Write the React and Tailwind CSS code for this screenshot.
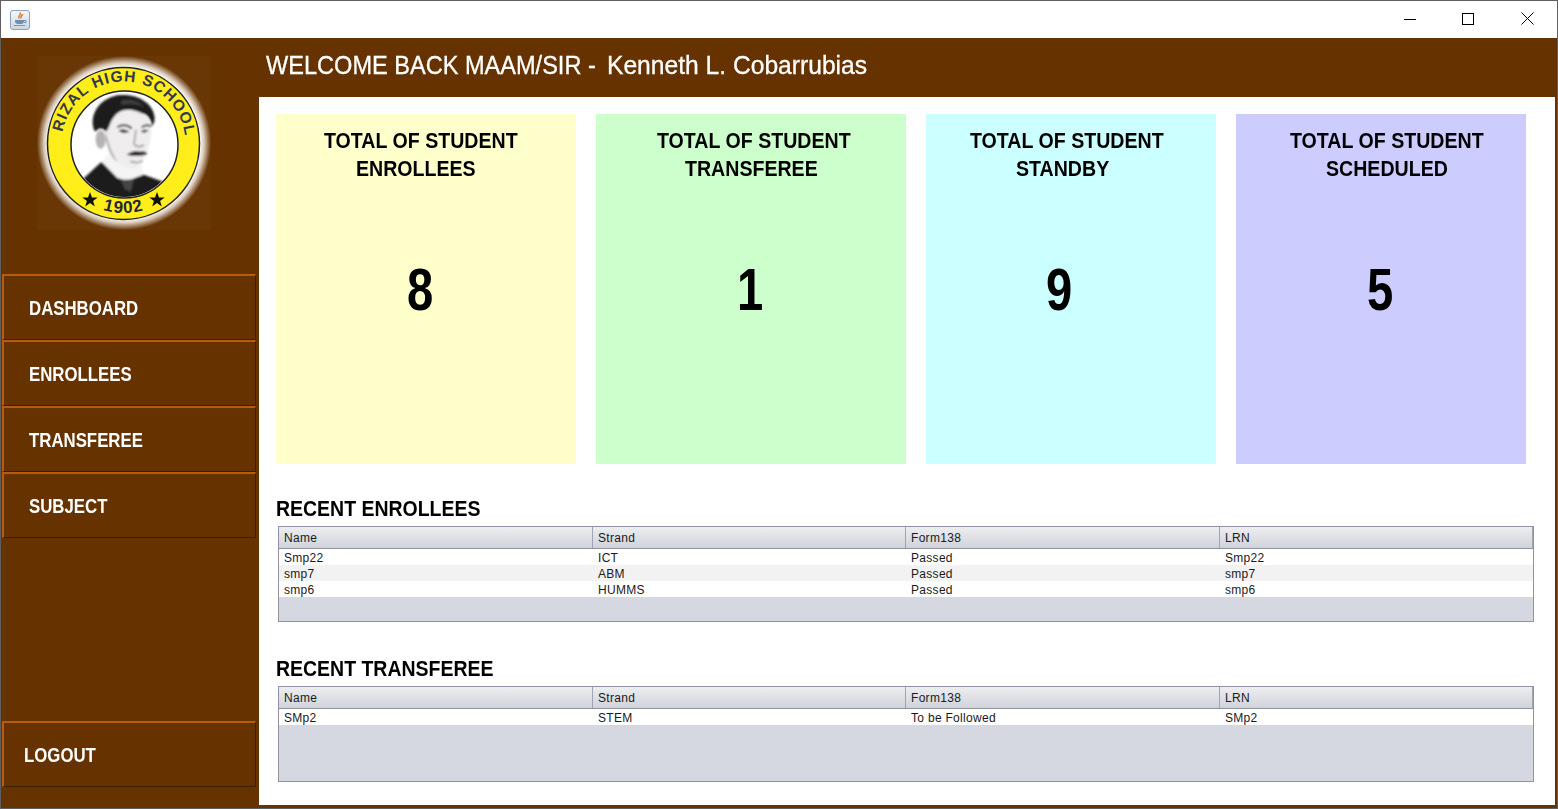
const sans = { fontFamily: '"Liberation Sans", Arial, sans-serif' };

const cards = [
  { bg: "bg-[#ffffcc]", w: "w-[300px]", line1: "ml-[48px]", line2: "ml-[80px]", num: "ml-[131px]", l2: "ENROLLEES", value: 8 },
  { bg: "bg-[#ccffcc]", w: "w-[310px]", line1: "ml-[61px]", line2: "ml-[89px]", num: "ml-[141px]", l2: "TRANSFEREE", value: 1 },
  { bg: "bg-[#ccffff]", w: "w-[290px]", line1: "ml-[44px]", line2: "ml-[90px]", num: "ml-[120px]", l2: "STANDBY", value: 9 },
  { bg: "bg-[#ccccff]", w: "w-[290px]", line1: "ml-[54px]", line2: "ml-[90px]", num: "ml-[131px]", l2: "SCHEDULED", value: 5 },
];

const enrollees = [
  ["Smp22", "ICT", "Passed", "Smp22"],
  ["smp7", "ABM", "Passed", "smp7"],
  ["smp6", "HUMMS", "Passed", "smp6"],
];
const transferees = [["SMp2", "STEM", "To be Followed", "SMp2"]];
const columns = ["Name", "Strand", "Form138", "LRN"];

function JavaIcon() {
  return (
    <div className="flex h-[20px] w-[20px] items-center justify-center rounded-[3px] border border-[#8aa4bd] bg-gradient-to-b from-[#f4f7fa] to-[#c9d6e2]">
      <svg width="14" height="15" viewBox="0 0 14 15">
        <path d="M7 0.500c1.500 2-2 3-1 6M9.500 2c0 2-2.500 2-1.500 4.500" stroke="#e8792b" strokeWidth="1.500" fill="none" />
        <path d="M2 8h9v1c0 2-1 3-3 3H5C3 12 2 11 2 9z" fill="#6f8fae" />
        <path d="M11 8.500h2v2h-2" stroke="#6f8fae" fill="none" />
        <path d="M1 13.500h11" stroke="#7d98b3" />
      </svg>
    </div>
  );
}

function TitleBar() {
  return (
    <div className="flex h-[37px] items-center bg-white pl-[9px]">
      <JavaIcon />
      <div className="ml-auto flex h-full">
        <button className="flex w-[59px] items-center justify-center pb-[2px]">
          <svg width="12" height="12" viewBox="0 0 12 12">
            <path d="M0 6.500h12" stroke="#000" />
          </svg>
        </button>
        <button className="mr-px flex w-[58px] items-center justify-center pb-[2px]">
          <svg width="12" height="12" viewBox="0 0 12 12">
            <rect x="0.500" y="0.500" width="11" height="11" fill="none" stroke="#000" />
          </svg>
        </button>
        <button className="flex w-[59px] items-center justify-center pb-[2px]">
          <svg width="13" height="13" viewBox="0 0 13 13">
            <path d="M0.500 0.500l12 12M12.500 0.500l-12 12" stroke="#000" />
          </svg>
        </button>
      </div>
    </div>
  );
}

function Logo() {
  return (
    <svg width="174" height="174" viewBox="0 0 174 174">
      <defs>
        <radialGradient id="glow" cx="0.500" cy="0.500" r="0.500">
          <stop offset="0.870" stopColor="#ffffff" />
          <stop offset="0.920" stopColor="#d9c9b8" />
          <stop offset="1" stopColor="#693706" />
        </radialGradient>
        <path id="topArc" d="M 24.500 87.500 A 62 62 0 0 1 148.500 87.500" />
        <path id="bottomArc" d="M 17 87.500 A 69.500 69.500 0 0 0 156 87.500" />
        <clipPath id="inner">
          <circle cx="87.500" cy="88.500" r="52.500" />
        </clipPath>
        <filter id="soft" x="-5%" y="-5%" width="110%" height="110%">
          <feGaussianBlur stdDeviation="2.500" />
        </filter>
      </defs>
      <rect width="174" height="174" fill="url(#glow)" />
      <circle cx="86.500" cy="87.500" r="76" fill="#ffee1a" stroke="#222" strokeWidth="1.500" />
      <circle cx="87.500" cy="88.500" r="53.500" fill="#fff" stroke="#222" strokeWidth="1.500" />
      <g transform="rotate(2 86.500 87.500)">
        <text fontSize="15.500" fontWeight="700" fill="#34384f" style={sans} letterSpacing="1">
          <textPath href="#topArc" startOffset="50%" textAnchor="middle">RIZAL HIGH SCHOOL</textPath>
        </text>
      </g>
      <text fontSize="17" fontWeight="700" fill="#25283a" style={sans} letterSpacing="1">
        <textPath href="#bottomArc" startOffset="50%" textAnchor="middle">1902</textPath>
      </text>
      <path d="M53 136l2 5.500h5.700l-4.600 3.400 1.700 5.600-4.800-3.400-4.800 3.400 1.700-5.600-4.600-3.400H51z" fill="#111" />
      <path d="M120 136l2 5.500h5.700l-4.600 3.400 1.700 5.600-4.800-3.400-4.800 3.400 1.700-5.600-4.600-3.400H118z" fill="#111" />
      <g clipPath="url(#inner)">
        <g transform="translate(-7 -6) scale(0.3333)" filter="url(#soft)">
          <path d="M145 400 L215 335 L270 385 L335 372 L400 395 L370 450 L190 450Z" fill="#1c1c1c" />
          <path d="M215 335 L235 310 L335 335 L338 375 L292 392 L262 384Z" fill="#f4f4f4" />
          <path d="M272 390 L312 388 L302 425 L284 418Z" fill="#444" />
          <ellipse cx="212" cy="268" rx="15" ry="28" fill="#b5b3b3" />
          <path d="M228 240 C228 210 250 180 300 178 C345 178 366 215 364 245 C362 290 345 330 322 350 C300 362 270 350 248 322 C238 305 232 285 228 270 Z" fill="#efeded" />
          <path d="M228 240 C232 270 240 300 262 335 C245 325 235 300 228 270Z" fill="#a9a7a7" />
          <path d="M192 240 C178 195 205 148 262 136 C322 128 372 160 374 205 C374 216 370 224 366 228 C362 205 350 192 335 190 C310 176 285 176 268 186 C252 196 244 212 238 228 C235 236 232 240 228 245 C218 232 205 232 198 245 Z" fill="#1c1c1c" />
          <path d="M272 152 C298 144 328 152 345 172 C322 162 296 160 276 166 Z" fill="#3c3c3c" />
          <path d="M262 232 C275 222 295 224 305 236 M335 232 C345 224 358 224 364 230" stroke="#3a3a3a" strokeWidth="6" fill="none" />
          <path d="M266 243 C275 236 290 238 298 246 L280 249Z M332 244 C340 238 350 238 356 242 L342 248Z" fill="#222" />
          <path d="M318 240 L312 282 C318 292 335 292 342 284" stroke="#9e9c9c" strokeWidth="5" fill="none" />
          <path d="M290 314 C305 303 320 300 330 305 C340 302 350 306 352 312 C335 320 310 320 290 314Z" fill="#2a2a2a" />
          <path d="M302 334 C315 340 330 338 338 332" stroke="#8c8a8a" strokeWidth="5" fill="none" />
        </g>
      </g>
    </svg>
  );
}

function NavButton({ label, pad = "pl-[25px]" }) {
  return (
    <button
      className={`flex h-[66px] w-[254px] items-center border border-t-2 border-l-2 border-t-[#b85c0a] border-l-[#b85c0a] border-r-[#3d1f00] border-b-[#3d1f00] ${pad} text-[21px] font-bold text-white`}
      style={sans}
    >
      <span className="origin-left scale-x-[0.8] whitespace-nowrap">{label}</span>
    </button>
  );
}

function Sidebar() {
  return (
    <div className="flex w-[258px] shrink-0 flex-col pl-px">
      <div className="ml-[35px] mt-[18px] h-[218px]">
        <Logo />
      </div>
      <NavButton label="DASHBOARD" />
      <NavButton label="ENROLLEES" />
      <NavButton label="TRANSFEREE" />
      <NavButton label="SUBJECT" />
      <div className="mt-auto mb-[21px]">
        <NavButton label="LOGOUT" pad="pl-[20px]" />
      </div>
    </div>
  );
}

function StatCard({ card }) {
  return (
    <div className={`h-[350px] ${card.w} ${card.bg} text-black`} style={sans}>
      <div className={`${card.line1} mt-[13px] whitespace-nowrap text-[22px] leading-[28px] font-bold`}>
        <span className="inline-block origin-left scale-x-[0.89]">TOTAL OF STUDENT</span>
      </div>
      <div className={`${card.line2} whitespace-nowrap text-[22px] leading-[28px] font-bold`}>
        <span className="inline-block origin-left scale-x-[0.89]">{card.l2}</span>
      </div>
      <div className={`${card.num} mt-[67px] text-[59px] leading-[80px] font-bold`}>
        <span className="inline-block origin-left scale-x-[0.8]">{card.value}</span>
      </div>
    </div>
  );
}

function DataTable({ rows }) {
  return (
    <div className="ml-[2px] flex h-[96px] w-[1256px] flex-col border border-[#8e93a0] bg-[#d5d8e0] text-[12px] tracking-[0.3px] text-[#1a1a1a]" style={sans}>
      <div className="grid h-[22px] shrink-0 grid-cols-[314px_313px_314px_1fr] border-b border-[#8e93a0] bg-gradient-to-b from-[#eceef1] to-[#d0d3da]">
        {columns.map((c) => (
          <div key={c} className="flex items-center border-r border-[#a0a4ae] pl-[5px]">{c}</div>
        ))}
      </div>
      {rows.map((row, i) => (
        <div key={i} className={`grid h-[16px] grid-cols-[314px_313px_314px_1fr] items-center pt-[2px] leading-[14px] ${i % 2 ? "bg-[#f2f2f2]" : "bg-white"}`}>
          {row.map((cell, j) => (
            <div key={j} className="pl-[5px]">{cell}</div>
          ))}
        </div>
      ))}
    </div>
  );
}

function Heading({ children, top }) {
  return (
    <div className={`${top} h-[28px] whitespace-nowrap text-[22px] leading-[28px] font-bold text-black`} style={sans}>
      <span className="inline-block origin-left scale-x-[0.885]">{children}</span>
    </div>
  );
}

export default function App() {
  return (
    <div className="flex h-[809px] w-[1558px] flex-col overflow-hidden border border-[#5f5f5f] bg-[#663300]">
      <TitleBar />
      <div className="flex min-h-0 flex-1">
        <Sidebar />
        <div className="flex min-w-0 flex-1 flex-col">
          <div className="flex h-[59px] shrink-0 items-center pb-[5px] pl-[7px] text-[26px] whitespace-nowrap text-white [-webkit-text-stroke:0.3px_white]" style={sans}>
            <span className="inline-block w-[341px] origin-left scale-x-[0.906]">WELCOME BACK MAAM/SIR -</span>
            <span className="inline-block origin-left scale-x-[0.947]">Kenneth L. Cobarrubias</span>
          </div>
          <div className="mr-[2px] mb-[3px] min-h-0 flex-1 bg-white pt-[17px] pl-[17px]">
            <div className="flex gap-[20px]">
              {cards.map((c) => (
                <StatCard key={c.l2} card={c} />
              ))}
            </div>
            <Heading top="mt-[31px]">RECENT ENROLLEES</Heading>
            <div className="mt-[3px]"><DataTable rows={enrollees} /></div>
            <Heading top="mt-[33px]">RECENT TRANSFEREE</Heading>
            <div className="mt-[3px]"><DataTable rows={transferees} /></div>
          </div>
        </div>
      </div>
    </div>
  );
}
